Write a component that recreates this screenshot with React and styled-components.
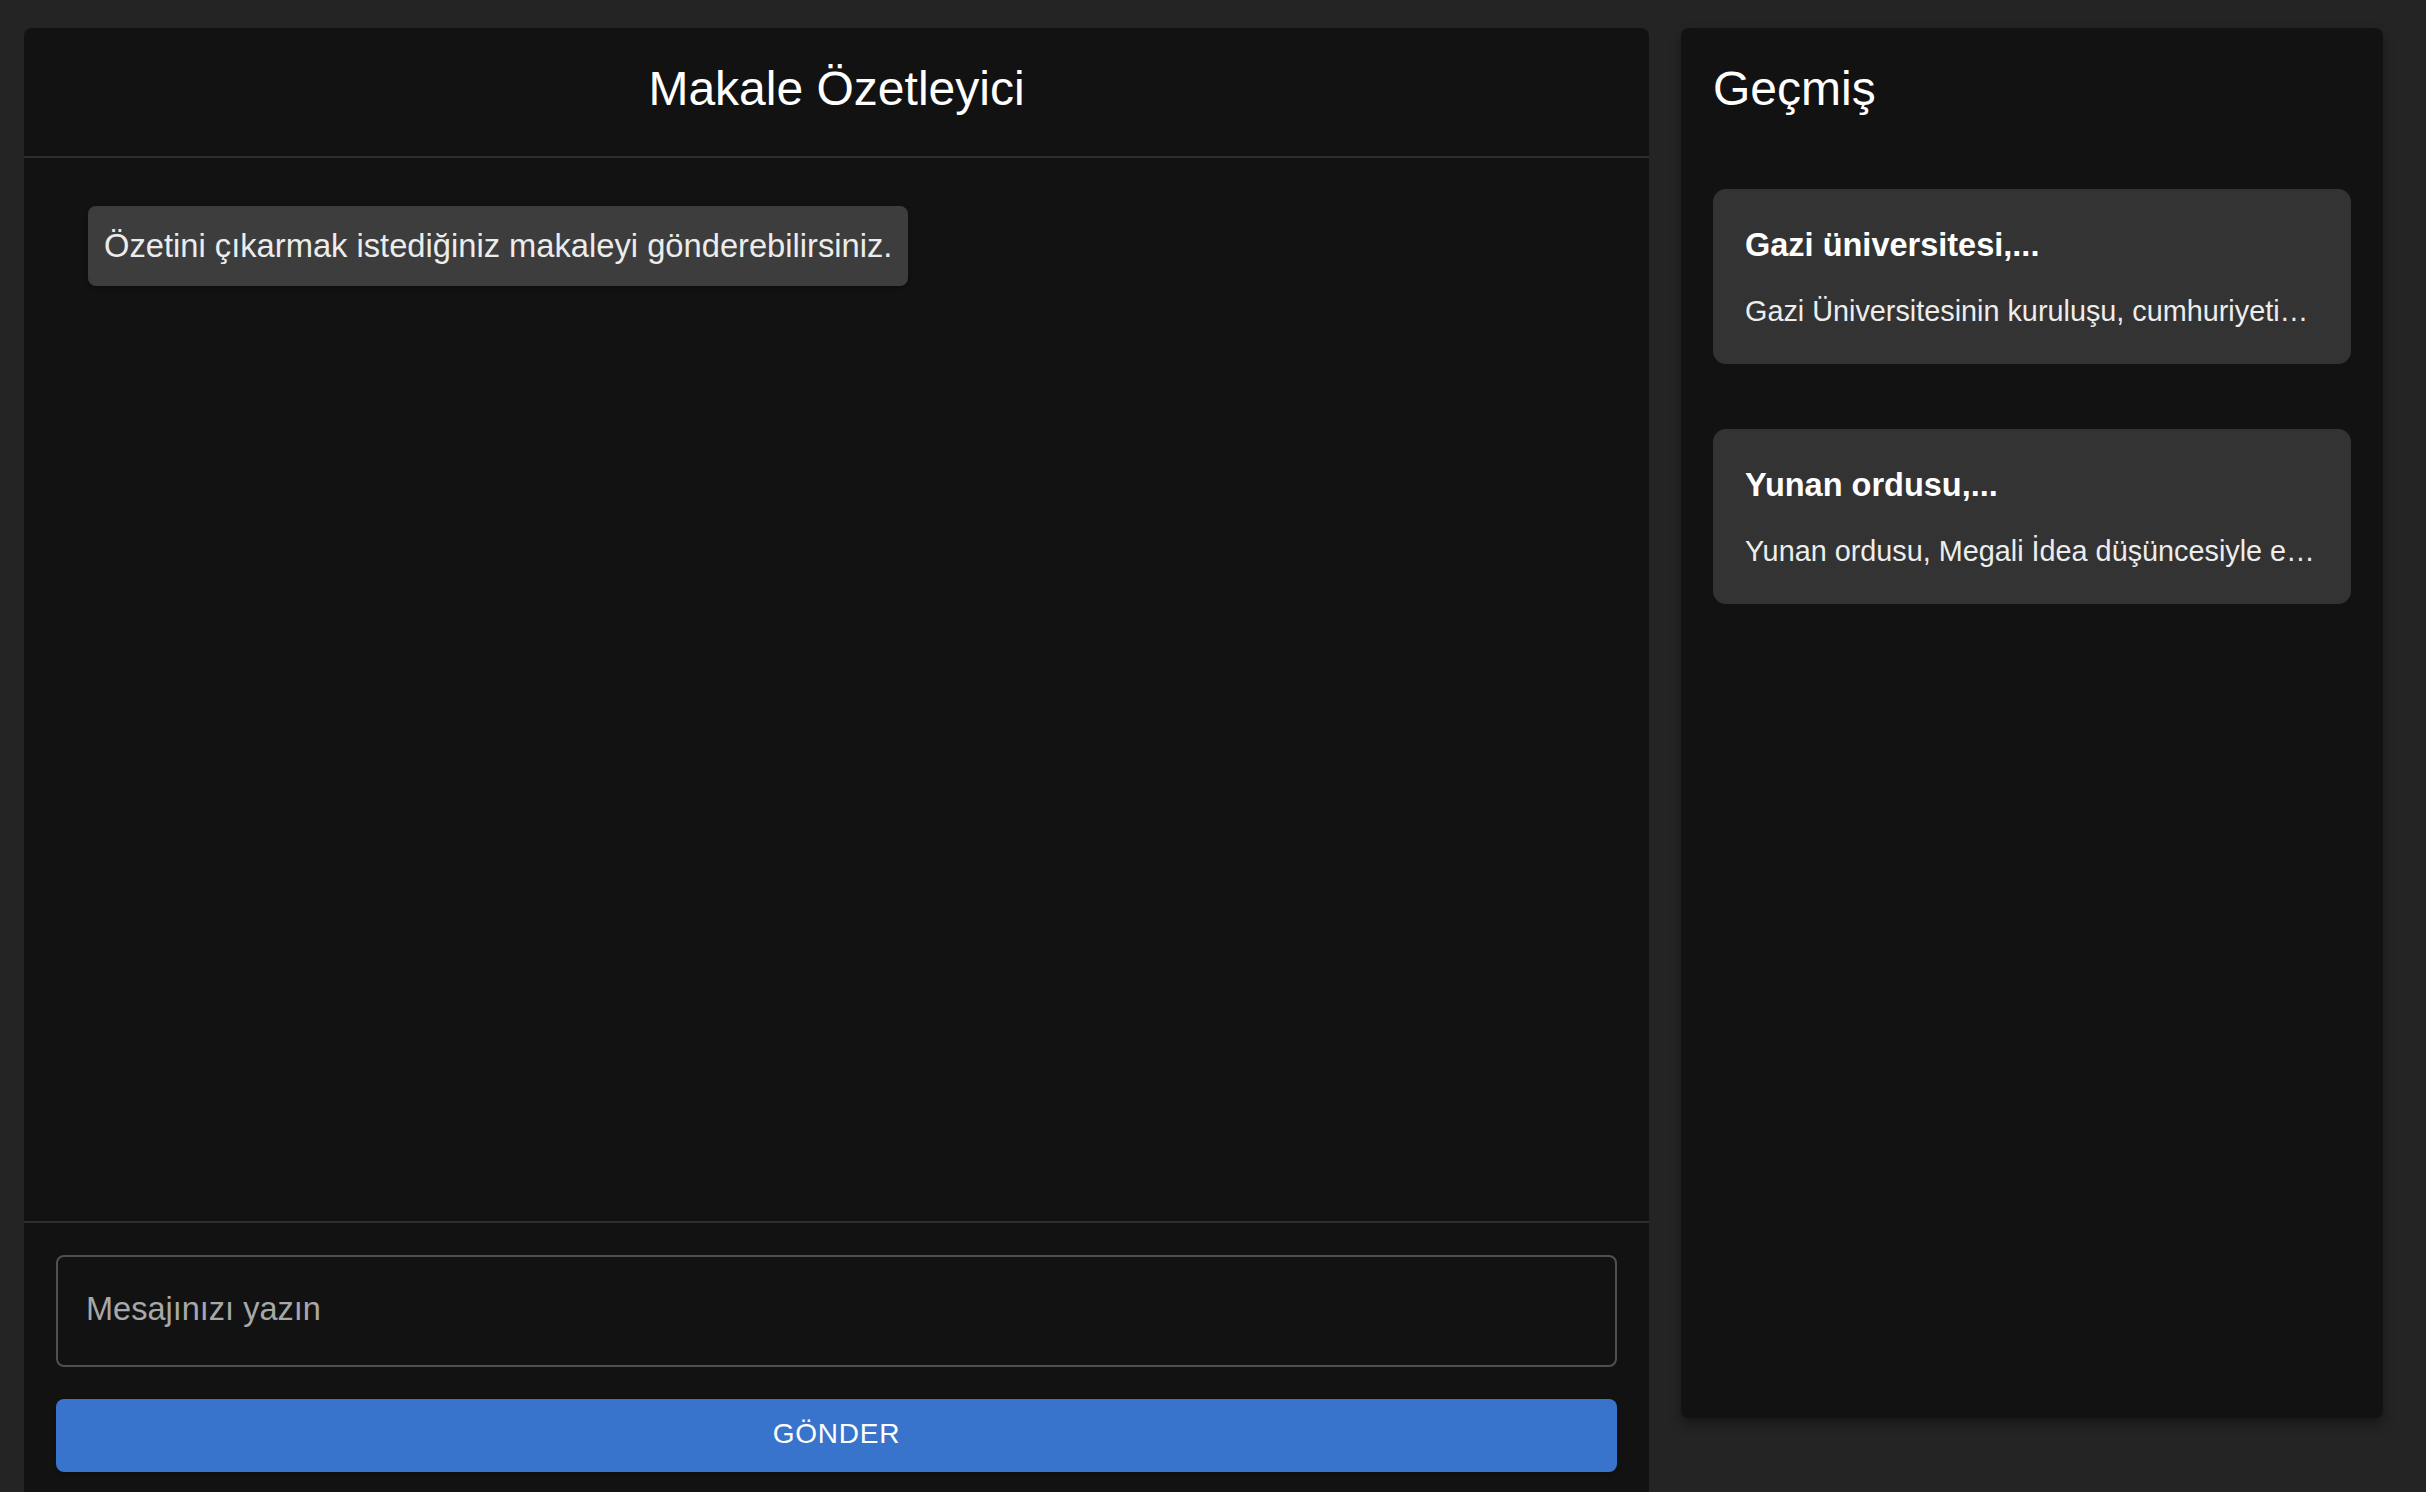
import React from 'react';
import styled, { createGlobalStyle } from 'styled-components';

const GlobalStyle = createGlobalStyle`
  html, body {
    margin: 0;
    padding: 0;
    background: #242424;
    overflow: hidden;
  }
  * {
    box-sizing: border-box;
  }
`;

const Page = styled.div`
  height: 100vh;
  overflow: hidden;
  display: flex;
  align-items: flex-start;
  gap: 32px;
  padding: 28px 43px 0 24px;
  background: #242424;
  font-family: "Liberation Sans", Arial, sans-serif;
  color: #fff;
`;

const ChatPanel = styled.section`
  width: 1625px;
  height: 1476px;
  flex-shrink: 0;
  display: flex;
  flex-direction: column;
  background: #121212;
  border-radius: 8px;
`;

const ChatHeader = styled.header`
  padding: 29px 32px 35px;
  border-bottom: 2px solid #2e2e2e;
  text-align: center;
`;

const Title = styled.h1`
  margin: 0;
  font-size: 48px;
  font-weight: 400;
  line-height: 64px;
  color: #fff;
`;

const Messages = styled.div`
  flex: 1;
  padding: 48px 64px;
  display: flex;
  flex-direction: column;
  align-items: flex-start;
  gap: 24px;
`;

const Bubble = styled.div`
  padding: 16px;
  background: #3d3d3d;
  border-radius: 8px;
  font-size: 32.7px;
  line-height: 48px;
  color: #ececec;
  box-shadow: 0 2px 4px rgba(0, 0, 0, 0.25);
`;

const Composer = styled.form`
  padding: 32px;
  border-top: 2px solid #2e2e2e;
  display: flex;
  flex-direction: column;
  gap: 32px;
`;

const MessageInput = styled.input`
  height: 112px;
  padding: 0 28px 3px;
  background: transparent;
  border: 2px solid #505050;
  border-radius: 8px;
  font-family: inherit;
  font-size: 32.5px;
  color: #fff;
  outline: none;
  &::placeholder {
    color: #a8a8a8;
  }
`;

const SendButton = styled.button`
  height: 73px;
  padding: 0 32px 3px;
  border: none;
  border-radius: 8px;
  background: #3874cb;
  color: #fff;
  font-family: inherit;
  font-size: 28px;
  font-weight: 400;
  letter-spacing: 0.8px;
  text-transform: uppercase;
  cursor: pointer;
  box-shadow: 0 3px 2px -2px rgba(0, 0, 0, 0.2), 0 2px 4px rgba(0, 0, 0, 0.14);
`;

const HistoryPanel = styled.aside`
  width: 702px;
  height: 1390px;
  flex-shrink: 0;
  padding: 29px 32px 32px;
  background: #121212;
  border-radius: 8px;
  box-shadow: 0 6px 12px rgba(0, 0, 0, 0.35);
`;

const HistoryTitle = styled.h2`
  margin: 0 0 68px;
  font-size: 48px;
  font-weight: 400;
  line-height: 64px;
  color: #fff;
`;

const HistoryList = styled.div`
  display: flex;
  flex-direction: column;
  gap: 65px;
`;

const HistoryCard = styled.div`
  padding: 32px 32px 33px;
  background: #333333;
  border-radius: 13px;
  cursor: pointer;
`;

const CardTitle = styled.div`
  font-size: 32.5px;
  font-weight: 700;
  line-height: 48px;
  margin-bottom: 22px;
  color: #fff;
`;

const CardText = styled.div`
  font-size: 28.8px;
  line-height: 40px;
  color: #ededed;
  white-space: nowrap;
  overflow: hidden;
  text-overflow: ellipsis;
`;

const history = [
  {
    title: 'Gazi üniversitesi,...',
    text: 'Gazi Üniversitesinin kuruluşu, cumhuriyetin ilk yıllarında öğretmen yetiştirmek amacıyla başlamıştır.',
  },
  {
    title: 'Yunan ordusu,...',
    text: 'Yunan ordusu, Megali İdea düşüncesiyle ege bölgesine çıkarma yapmıştır.',
  },
];

export default function App() {
  return (
    <>
      <GlobalStyle />
      <Page>
        <ChatPanel>
          <ChatHeader>
            <Title>Makale Özetleyici</Title>
          </ChatHeader>
          <Messages>
            <Bubble>Özetini çıkarmak istediğiniz makaleyi gönderebilirsiniz.</Bubble>
          </Messages>
          <Composer onSubmit={(e) => e.preventDefault()}>
            <MessageInput placeholder="Mesajınızı yazın" />
            <SendButton type="submit">Gönder</SendButton>
          </Composer>
        </ChatPanel>
        <HistoryPanel>
          <HistoryTitle>Geçmiş</HistoryTitle>
          <HistoryList>
            {history.map((item) => (
              <HistoryCard key={item.title}>
                <CardTitle>{item.title}</CardTitle>
                <CardText>{item.text}</CardText>
              </HistoryCard>
            ))}
          </HistoryList>
        </HistoryPanel>
      </Page>
    </>
  );
}
